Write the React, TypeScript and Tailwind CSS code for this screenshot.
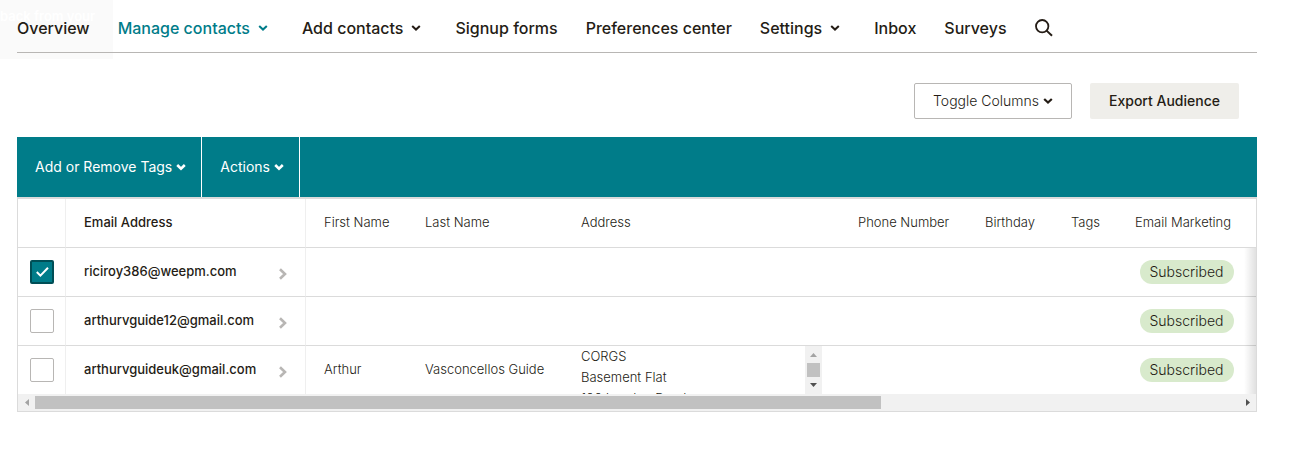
import type { ReactNode } from "react";

function Chevron({ className = "", weight = 2 }: { className?: string; weight?: number }) {
  return (
    <svg viewBox="0 0 10 10" className={`size-[10px] shrink-0 ${className}`} fill="none" stroke="currentColor" strokeWidth={weight} aria-hidden="true">
      <path d="M1.2 3 5 6.6 8.8 3" />
    </svg>
  );
}

const navItems = [
  { label: "Overview" },
  { label: "Manage contacts", menu: true, active: true },
  { label: "Add contacts", menu: true },
  { label: "Signup forms" },
  { label: "Preferences center" },
  { label: "Settings", menu: true },
  { label: "Inbox" },
  { label: "Surveys" },
];

const contacts = [
  { email: "riciroy386@weepm.com", checked: true, first: "", last: "", address: [] as string[] },
  { email: "arthurvguide12@gmail.com", checked: false, first: "", last: "", address: [] as string[] },
  {
    email: "arthurvguideuk@gmail.com",
    checked: false,
    first: "Arthur",
    last: "Vasconcellos Guide",
    address: ["CORGS", "Basement Flat", "100 London Road"],
  },
];

function Nav() {
  return (
    <nav className="relative mr-[38px] flex h-[53px] items-center gap-7 border-b border-[#b8b6b4] pt-1 text-base leading-5 font-medium">
      {navItems.map((item) =>
        item.menu ? (
          <button key={item.label} className={`flex items-center gap-2 pr-1.5 whitespace-nowrap ${item.active ? "text-[#007c89]" : ""}`}>
            {item.label}
            <Chevron />
          </button>
        ) : (
          <a key={item.label} href="#" className="whitespace-nowrap">
            {item.label}
          </a>
        ),
      )}
      <button aria-label="Search">
        <svg viewBox="0 0 18 18" className="size-[18px]" fill="none" stroke="currentColor" strokeWidth="1.8" aria-hidden="true">
          <circle cx="7.2" cy="7.2" r="6.2" />
          <path d="m11.6 11.6 5.4 5.2" strokeWidth="2" />
        </svg>
      </button>
    </nav>
  );
}

function Th({ children, className = "" }: { children?: ReactNode; className?: string }) {
  return <th className={`h-[49px] border-b border-b-[#dbdbdb] px-[18px] py-0 text-left font-light whitespace-nowrap ${className}`}>{children}</th>;
}

function Td({ children, className = "" }: { children?: ReactNode; className?: string }) {
  return <td className={`h-[49px] border-b border-b-[#dbdbdb] py-0 whitespace-nowrap ${className}`}>{children}</td>;
}

function AddressBox({ lines }: { lines: string[] }) {
  return (
    <div className="flex h-12 overflow-hidden">
      <div className="flex-1 leading-[21px]">
        {lines.map((line) => (
          <div key={line}>{line}</div>
        ))}
      </div>
      <div className="flex w-[17px] flex-col items-center justify-between bg-[#f1f1f1] py-[7px]">
        <svg viewBox="0 0 7 4" className="h-1 w-[7px]" aria-hidden="true">
          <path d="M0 4 3.5 0 7 4z" fill="#a3a3a3" />
        </svg>
        <div className="h-[14px] w-[13px] bg-[#c1c1c1]" />
        <svg viewBox="0 0 7 4" className="h-1 w-[7px]" aria-hidden="true">
          <path d="M0 0 3.5 4 7 0z" fill="#505050" />
        </svg>
      </div>
    </div>
  );
}

function ContactTable() {
  return (
    <div className="border border-t-2 border-[#dbdbdb]">
      <div className="relative h-[195px] overflow-hidden">
        <table className="w-full table-fixed border-separate border-spacing-0 text-[13px] font-light">
          <colgroup>
            <col className="w-12" />
            <col className="w-60" />
            <col className="w-[101px]" />
            <col className="w-[156px]" />
            <col className="w-[277px]" />
            <col className="w-[127px]" />
            <col className="w-[86px]" />
            <col className="w-16" />
            <col />
          </colgroup>
          <thead>
            <tr>
              <Th className="border-r border-r-[#efefef]" />
              <Th className="border-r border-r-[#efefef]">
                <span className="font-medium">Email Address</span>
              </Th>
              <Th>First Name</Th>
              <Th>Last Name</Th>
              <Th>Address</Th>
              <Th>Phone Number</Th>
              <Th>Birthday</Th>
              <Th>Tags</Th>
              <Th>Email Marketing</Th>
            </tr>
          </thead>
          <tbody>
            {contacts.map((c) => (
              <tr key={c.email}>
                <Td className="border-r border-r-[#efefef] px-0">
                  <label className="relative mx-auto block size-6">
                    <input
                      type="checkbox"
                      defaultChecked={c.checked}
                      aria-label={c.email}
                      className="peer block size-6 appearance-none rounded-[2px] border border-[#b8b6b4] bg-white checked:border-2 checked:border-[#004e56] checked:bg-[#007c89]"
                    />
                    <svg viewBox="0 0 24 24" className="pointer-events-none absolute inset-0 hidden size-6 peer-checked:block" fill="none" stroke="#fff" strokeWidth="2" aria-hidden="true">
                      <path d="m6.8 12 3.6 3.6 7.6-7.8" />
                    </svg>
                  </label>
                </Td>
                <Td className="border-r border-r-[#efefef] px-[18px]">
                  <div className="flex items-center justify-between">
                    <a href="#" className="font-medium">
                      {c.email}
                    </a>
                    <svg viewBox="0 0 8 12" className="mt-1 h-3 w-2" fill="none" stroke="#b8b6b4" strokeWidth="2.6" aria-hidden="true">
                      <path d="M1 1.2 6 6l-5 4.8" />
                    </svg>
                  </div>
                </Td>
                <Td className="px-[18px]">{c.first}</Td>
                <Td className="px-[18px]">{c.last}</Td>
                <Td className="px-[18px]">{c.address.length > 0 && <AddressBox lines={c.address} />}</Td>
                <Td />
                <Td />
                <Td />
                <Td className="px-0">
                  <div className="flex justify-center">
                    <span className="h-6 rounded-full bg-[#d8eacc] px-[10px] text-sm leading-6">Subscribed</span>
                  </div>
                </Td>
              </tr>
            ))}
          </tbody>
        </table>
        <div className="absolute top-[49px] right-0 bottom-0 w-3 bg-linear-to-r from-transparent to-black/12" />
      </div>
      <div className="flex h-[17px] items-center bg-[#f1f1f1]">
        <div className="flex w-[17px] justify-center">
          <svg viewBox="0 0 4 7" className="h-[7px] w-1" aria-hidden="true">
            <path d="M4 0 0 3.5 4 7z" fill="#a3a3a3" />
          </svg>
        </div>
        <div className="flex-1">
          <div className="h-[13px] w-[70.3%] bg-[#c1c1c1]" />
        </div>
        <div className="flex w-[17px] justify-center">
          <svg viewBox="0 0 4 7" className="h-[7px] w-1" aria-hidden="true">
            <path d="M0 0 4 3.5 0 7z" fill="#505050" />
          </svg>
        </div>
      </div>
    </div>
  );
}

export default function App() {
  return (
    <div className="relative bg-white pb-12 pl-[17px] font-['Inter','Liberation_Sans',sans-serif] text-[#241c15]">
      <div className="absolute top-0 left-0 h-[59px] w-[113px] bg-[#fafafa] pt-2 text-[13px] leading-4 font-semibold text-white">back from your</div>
      <div className="pr-[17px]">
        <Nav />
        <div className="mr-14 flex justify-end gap-[18px] pt-[30px]">
          <button className="flex h-9 items-center gap-1 rounded-[2px] border border-[#b8b6b4] px-[18px] text-sm font-light">
            Toggle Columns
            <Chevron weight={2.2} />
          </button>
          <button className="h-9 rounded-[2px] bg-[#efeeea] px-[19px] text-sm font-medium">Export Audience</button>
        </div>
        <div className="mt-[18px] mr-[38px]">
          <div className="flex h-[60px] bg-[#007c89] text-sm text-white">
            <button className="flex items-center gap-1 border-r border-white pr-[15px] pl-[18px]">
              Add or Remove Tags
              <Chevron weight={2.6} />
            </button>
            <button className="flex items-center gap-1 border-r border-white pr-[15px] pl-[18px]">
              Actions
              <Chevron weight={2.6} />
            </button>
          </div>
          <ContactTable />
        </div>
      </div>
    </div>
  );
}
